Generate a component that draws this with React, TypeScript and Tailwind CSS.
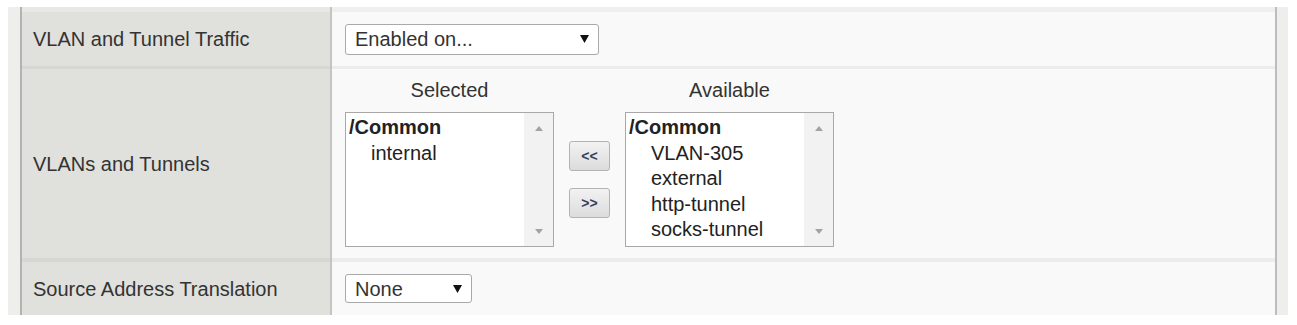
import React from 'react';

const font = "font-['Liberation_Sans',Arial,sans-serif]";

function Select({ value, width }: { value: string; width: string }) {
  return (
    <div
      className={`${width} flex items-center justify-between bg-white border border-[#a9a9a9] rounded-[3px] pl-[9px] pr-[9px] text-[20px] leading-none text-[#333]`}
    >
      <span>{value}</span>
      <svg width="9" height="8" viewBox="0 0 9 8">
        <path d="M0 0 H9 L4.5 8 Z" fill="#111" />
      </svg>
    </div>
  );
}

function ListBox({ items }: { items: string[] }) {
  return (
    <div className="w-[209px] h-[135px] flex bg-white border border-[#a8a8a8]">
      <div className="flex-1 pt-[2px] pl-[3px] text-[20px] leading-[25.5px] text-[#222] overflow-hidden">
        <div className="font-bold">/Common</div>
        {items.map((it) => (
          <div key={it} className="pl-[22px]">
            {it}
          </div>
        ))}
      </div>
      <div className="w-[29px] bg-[#f2f2f2] flex flex-col items-center justify-between pt-[13px] pb-[12px]">
        <svg width="8" height="5" viewBox="0 0 8 5">
          <path d="M0 5 L4 0 L8 5 Z" fill="#a3a3a3" />
        </svg>
        <svg width="8" height="5" viewBox="0 0 8 5">
          <path d="M0 0 H8 L4 5 Z" fill="#a3a3a3" />
        </svg>
      </div>
    </div>
  );
}

function MoveButton({ label }: { label: string }) {
  return (
    <button className="w-[41px] h-[30px] rounded-[3px] border border-[#b3b3b3] bg-gradient-to-b from-[#f2f2f2] to-[#dcdcdc] text-[14px] leading-none text-[#35405a] font-bold">
      {label}
    </button>
  );
}

function Row({ label, height, children }: { label: string; height: string; children: React.ReactNode }) {
  return (
    <div className={`flex ${height}`}>
      <div className="w-[308px] bg-[#e0e0dc] flex items-center pl-[11px] text-[20px] text-[#333]">{label}</div>
      <div className="w-[2px] bg-[#c4c4c0]" />
      <div className="flex-1 bg-[#f9f9f9] flex items-center pl-[13px]">{children}</div>
    </div>
  );
}

function Separator({ height }: { height: string }) {
  return (
    <div className={`flex ${height}`}>
      <div className="w-[308px] bg-[#d6d6d2]" />
      <div className="w-[2px] bg-[#c4c4c0]" />
      <div className="flex-1 bg-[#ececec]" />
    </div>
  );
}

export default function App() {
  return (
    <div className={`${font} bg-white w-[1297px] h-[325px] pt-[7px] pl-[8px]`}>
      <div className="flex w-[1280px]">
        <div className="w-[12px] bg-[#eeeeec]" />
        <div className="w-[2px] bg-[#b3b3b0]" />
        <div className="flex-1 flex flex-col">
          <div className="flex h-[5px]">
            <div className="w-[308px] bg-[#e8e8e5]" />
            <div className="w-[2px] bg-[#c4c4c0]" />
            <div className="flex-1 bg-[#efefef]" />
          </div>
          <Row label="VLAN and Tunnel Traffic" height="h-[54px]">
            <Select value="Enabled on..." width="w-[254px] h-[31px]" />
          </Row>
          <Separator height="h-[3px]" />
          <Row label="VLANs and Tunnels" height="h-[189px]">
            <div className="self-start pt-[9px] flex items-end">
              <div className="flex flex-col items-center">
                <div className="text-[20px] leading-[24px] text-[#333] mb-[10px]">Selected</div>
                <ListBox items={['internal']} />
              </div>
              <div className="h-[135px] flex flex-col justify-center gap-[17px] mx-[15px]">
                <MoveButton label="<<" />
                <MoveButton label=">>" />
              </div>
              <div className="flex flex-col items-center">
                <div className="text-[20px] leading-[24px] text-[#333] mb-[10px]">Available</div>
                <ListBox items={['VLAN-305', 'external', 'http-tunnel', 'socks-tunnel']} />
              </div>
            </div>
          </Row>
          <Separator height="h-[4px]" />
          <Row label="Source Address Translation" height="h-[53px]">
            <Select value="None" width="w-[127px] h-[29px]" />
          </Row>
        </div>
        <div className="w-[2px] bg-[#bdbdbb]" />
        <div className="w-[11px] bg-[#eeeeec]" />
      </div>
    </div>
  );
}
